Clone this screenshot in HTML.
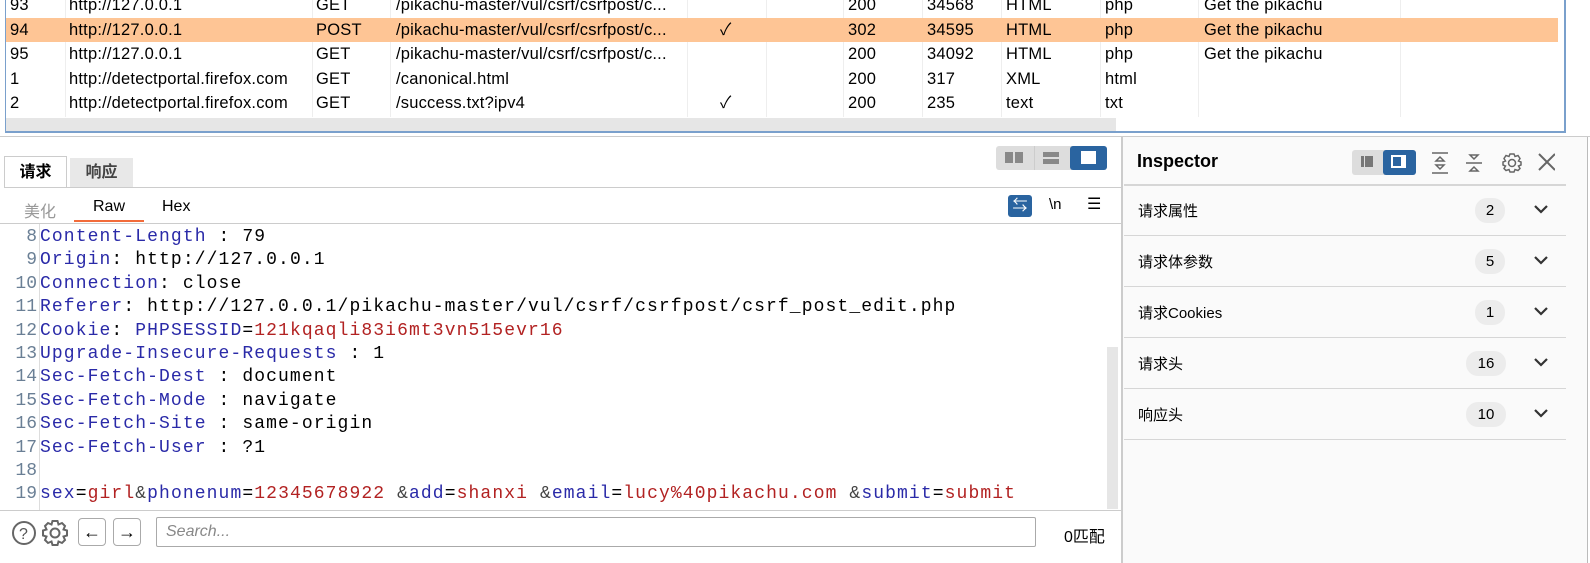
<!DOCTYPE html>
<html><head><meta charset="utf-8"><style>
*{box-sizing:border-box;margin:0;padding:0}
body{width:1590px;height:563px;overflow:hidden;background:#fff;font-family:"Liberation Sans","Noto Sans CJK SC",sans-serif;font-size:15px;color:#000;position:relative}
.abs{position:absolute}
.row{position:absolute;left:6px;width:1552px;height:24.5px;line-height:24.5px;white-space:nowrap;font-size:16.5px;letter-spacing:0.2px}
.row span{position:absolute;top:0}
.sep{position:absolute;top:0;height:117px;width:1px;background:#eee}
.code{position:absolute;left:0;font-family:"Liberation Mono",monospace;font-size:18px;letter-spacing:1.1px;white-space:pre;height:23.4px;line-height:23.4px}
.ln{display:inline-block;width:40px;text-align:right;color:#6a7f95;padding-right:3px;letter-spacing:0}
.k{color:#2a2aa8}.v{color:#b22222}.p{color:#444}
.sec{position:absolute;left:1124px;width:442px;height:51px;border-bottom:1.5px solid #d6d6d6;font-size:15px}
.sec .t{position:absolute;left:14px;top:15px}
.sec .b{position:absolute;top:13px;height:25px;border-radius:12px;background:#ececec;text-align:center;line-height:25px}
.sec svg{position:absolute;left:410px;top:19px}
</style></head><body>
<div class="abs" style="left:5px;top:0;width:1px;height:133px;background:#7aa0cc"></div>
<div class="abs" style="left:1564px;top:0;width:2px;height:133px;background:#7aa0cc"></div>
<div class="sep" style="left:65px"></div><div class="sep" style="left:312px"></div><div class="sep" style="left:390px"></div><div class="sep" style="left:687px"></div><div class="sep" style="left:766px"></div><div class="sep" style="left:843px"></div><div class="sep" style="left:922px"></div><div class="sep" style="left:1001px"></div><div class="sep" style="left:1100px"></div><div class="sep" style="left:1198px"></div><div class="sep" style="left:1400px"></div>
<div class="row" style="top:-7px"><span style="left:4px">93</span><span style="left:63px">http://127.0.0.1</span><span style="left:310px">GET</span><span style="left:390px">/pikachu-master/vul/csrf/csrfpost/c...</span><span style="left:842px">200</span><span style="left:921px">34568</span><span style="left:1000px">HTML</span><span style="left:1099px">php</span><span style="left:1198px">Get the pikachu</span></div>
<div class="row" style="top:17.5px;background:#fec595"><span style="left:4px">94</span><span style="left:63px">http://127.0.0.1</span><span style="left:310px">POST</span><span style="left:390px">/pikachu-master/vul/csrf/csrfpost/c...</span><span style="left:714px">✓</span><span style="left:842px">302</span><span style="left:921px">34595</span><span style="left:1000px">HTML</span><span style="left:1099px">php</span><span style="left:1198px">Get the pikachu</span></div>
<div class="row" style="top:42px"><span style="left:4px">95</span><span style="left:63px">http://127.0.0.1</span><span style="left:310px">GET</span><span style="left:390px">/pikachu-master/vul/csrf/csrfpost/c...</span><span style="left:842px">200</span><span style="left:921px">34092</span><span style="left:1000px">HTML</span><span style="left:1099px">php</span><span style="left:1198px">Get the pikachu</span></div>
<div class="row" style="top:66.5px"><span style="left:4px">1</span><span style="left:63px">http://detectportal.firefox.com</span><span style="left:310px">GET</span><span style="left:390px">/canonical.html</span><span style="left:842px">200</span><span style="left:921px">317</span><span style="left:1000px">XML</span><span style="left:1099px">html</span></div>
<div class="row" style="top:91px"><span style="left:4px">2</span><span style="left:63px">http://detectportal.firefox.com</span><span style="left:310px">GET</span><span style="left:390px">/success.txt?ipv4</span><span style="left:714px">✓</span><span style="left:842px">200</span><span style="left:921px">235</span><span style="left:1000px">text</span><span style="left:1099px">txt</span></div>
<div class="abs" style="left:6px;top:118px;width:1110px;height:13px;background:#e6e6e6"></div>
<div class="abs" style="left:5px;top:131px;width:1561px;height:2px;background:#7aa0cc"></div>
<div class="abs" style="left:0;top:136px;width:1590px;height:1px;background:#ccc"></div>
<div class="abs" style="left:4px;top:156px;width:63px;height:32px;border:1px solid #ccc;border-bottom:none;background:#fff;font-weight:bold;font-size:16px;text-align:center;line-height:32px">请求</div>
<div class="abs" style="left:70px;top:158px;width:63px;height:30px;background:#e8e8e8;font-weight:bold;font-size:16px;text-align:center;line-height:30px;color:#444">响应</div>
<div class="abs" style="left:4px;top:187px;width:1117px;height:1px;background:#ccc"></div>
<div class="abs" style="left:996px;top:146px;width:111px;height:24px;border-radius:3px;background:#ddd"></div>
<div class="abs" style="left:1005px;top:152px;width:8px;height:11px;background:#888"></div><div class="abs" style="left:1015px;top:152px;width:8px;height:11px;background:#888"></div>
<div class="abs" style="left:1034px;top:146px;width:1px;height:24px;background:#ccc"></div>
<div class="abs" style="left:1043px;top:152px;width:16px;height:5px;background:#888"></div><div class="abs" style="left:1043px;top:159px;width:16px;height:5px;background:#888"></div>
<div class="abs" style="left:1070px;top:146px;width:37px;height:24px;border-radius:3px;background:#2a64a0"></div>
<div class="abs" style="left:1081px;top:151px;width:15px;height:13px;background:#fff"></div>
<div class="abs" style="left:24px;top:198px;color:#999;font-size:16px">美化</div>
<div class="abs" style="left:93px;top:198px;font-size:16px">Raw</div>
<div class="abs" style="left:74px;top:220px;width:70px;height:2px;background:#f26b3a"></div>
<div class="abs" style="left:162px;top:198px;font-size:16px">Hex</div>
<div class="abs" style="left:1008px;top:195px;width:24px;height:22px;border-radius:3px;background:#2a64a0;color:#fff;text-align:center;line-height:22px;font-size:15px">⇆</div>
<div class="abs" style="left:1049px;top:196px;font-size:15px">\n</div>
<div class="abs" style="left:1087px;top:194px;font-size:16px">☰</div>
<div class="abs" style="left:0;top:223px;width:1121px;height:1px;background:#ccc"></div>
<div class="code" style="top:226px"><span class="ln">8</span><span class="k">Content-Length</span> : 79</div>
<div class="code" style="top:249.4px"><span class="ln">9</span><span class="k">Origin</span>: http://127.0.0.1</div>
<div class="code" style="top:272.8px"><span class="ln">10</span><span class="k">Connection</span>: close</div>
<div class="code" style="top:296.2px"><span class="ln">11</span><span class="k">Referer</span>: http://127.0.0.1/pikachu-master/vul/csrf/csrfpost/csrf_post_edit.php</div>
<div class="code" style="top:319.6px"><span class="ln">12</span><span class="k">Cookie</span>: <span class="k">PHPSESSID</span>=<span class="v">121kqaqli83i6mt3vn515evr16</span></div>
<div class="code" style="top:343px"><span class="ln">13</span><span class="k">Upgrade-Insecure-Requests</span> : 1</div>
<div class="code" style="top:366.4px"><span class="ln">14</span><span class="k">Sec-Fetch-Dest</span> : document</div>
<div class="code" style="top:389.8px"><span class="ln">15</span><span class="k">Sec-Fetch-Mode</span> : navigate</div>
<div class="code" style="top:413.2px"><span class="ln">16</span><span class="k">Sec-Fetch-Site</span> : same-origin</div>
<div class="code" style="top:436.6px"><span class="ln">17</span><span class="k">Sec-Fetch-User</span> : ?1</div>
<div class="code" style="top:460px"><span class="ln">18</span></div>
<div class="code" style="top:483.4px"><span class="ln">19</span><span class="k">sex</span>=<span class="v">girl</span><span class="p">&amp;</span><span class="k">phonenum</span>=<span class="v">12345678922</span> <span class="p">&amp;</span><span class="k">add</span>=<span class="v">shanxi</span> <span class="p">&amp;</span><span class="k">email</span>=<span class="v">lucy%40pikachu.com</span> <span class="p">&amp;</span><span class="k">submit</span>=<span class="v">submit</span></div>
<div class="abs" style="left:39px;top:224px;width:1px;height:286px;background:#ddd"></div>
<div class="abs" style="left:1107px;top:347px;width:11px;height:162px;background:#e6e6e6"></div>
<div class="abs" style="left:0;top:510px;width:1121px;height:1px;background:#ccc"></div>
<svg class="abs" style="left:10px;top:518px" width="62" height="30"><circle cx="14" cy="15" r="11" fill="none" stroke="#666" stroke-width="2"/><text x="9" y="21" font-size="16" font-family="Liberation Sans" fill="#555">?</text><g transform="translate(45,15)" fill="none" stroke="#666" stroke-width="2"><circle r="4.5"/><path d="M-2.5,-12H2.5L3.5,-8.5L7,-10L10,-7L8.5,-3.5L12,-2.5V2.5L8.5,3.5L10,7L7,10L3.5,8.5L2.5,12H-2.5L-3.5,8.5L-7,10L-10,7L-8.5,3.5L-12,2.5V-2.5L-8.5,-3.5L-10,-7L-7,-10L-3.5,-8.5Z"/></g></svg>
<div class="abs" style="left:78px;top:518px;width:28px;height:28px;border:1px solid #aaa;border-radius:4px;text-align:center;line-height:26px;font-size:18px">←</div>
<div class="abs" style="left:113px;top:518px;width:28px;height:28px;border:1px solid #aaa;border-radius:4px;text-align:center;line-height:26px;font-size:18px">→</div>
<div class="abs" style="left:156px;top:517px;width:880px;height:30px;border:1px solid #aaa;border-radius:2px;padding-left:9px;line-height:28px;color:#888;font-style:italic;font-size:16px">Search...</div>
<div class="abs" style="left:1064px;top:523px;font-size:16px">0匹配</div>
<div class="abs" style="left:1121px;top:137px;width:2px;height:426px;background:#ccc"></div>
<div class="abs" style="left:1123px;top:137px;width:465px;height:426px;background:#fafafa;border-right:1.5px solid #bbb"></div>
<div class="abs" style="left:1137px;top:151px;font-weight:bold;font-size:18px">Inspector</div>
<div class="abs" style="left:1352px;top:150px;width:64px;height:25px;border-radius:3px;background:#ddd"></div>
<div class="abs" style="left:1361px;top:156px;width:3px;height:11px;background:#777"></div><div class="abs" style="left:1365px;top:156px;width:8px;height:11px;background:#777"></div>
<div class="abs" style="left:1383px;top:150px;width:33px;height:25px;border-radius:3px;background:#2a64a0"></div>
<div class="abs" style="left:1391px;top:155px;width:15px;height:13px;border:2px solid #fff;border-right-width:5px"></div>
<svg class="abs" style="left:1430px;top:150px" width="125" height="26" fill="none" stroke="#666" stroke-width="1.5"><path d="M2,3H18M2,23H18M10,7L6,11H14ZM10,19L6,15H14Z"/><path d="M36,13H52M44,9L40,5H48ZM44,17L40,21H48Z"/><g transform="translate(82,13)"><circle r="3.5"/><path d="M-2,-9H2L3,-6.5L6,-7.5L8,-4.5L6.5,-2L9,-1V2L6.5,3L8,5.5L6,7.5L3,6.5L2,9H-2L-3,6.5L-6,7.5L-8,5.5L-6.5,3L-9,2V-1L-6.5,-2L-8,-4.5L-6,-7.5L-3,-6.5Z"/></g><path d="M109,4L125,20M125,4L109,20" stroke-width="2"/></svg>
<div class="abs" style="left:1124px;top:184px;width:442px;height:1.5px;background:#d6d6d6"></div>
<div class="sec" style="top:185px"><span class="t">请求属性</span><span class="b" style="left:351px;width:30px">2</span><svg width="14" height="10"><path d="M1,2L7,8L13,2" fill="none" stroke="#333" stroke-width="2.2"/></svg></div>
<div class="sec" style="top:236px"><span class="t">请求体参数</span><span class="b" style="left:351px;width:30px">5</span><svg width="14" height="10"><path d="M1,2L7,8L13,2" fill="none" stroke="#333" stroke-width="2.2"/></svg></div>
<div class="sec" style="top:287px"><span class="t">请求Cookies</span><span class="b" style="left:351px;width:30px">1</span><svg width="14" height="10"><path d="M1,2L7,8L13,2" fill="none" stroke="#333" stroke-width="2.2"/></svg></div>
<div class="sec" style="top:338px"><span class="t">请求头</span><span class="b" style="left:342px;width:40px">16</span><svg width="14" height="10"><path d="M1,2L7,8L13,2" fill="none" stroke="#333" stroke-width="2.2"/></svg></div>
<div class="sec" style="top:389px"><span class="t">响应头</span><span class="b" style="left:342px;width:40px">10</span><svg width="14" height="10"><path d="M1,2L7,8L13,2" fill="none" stroke="#333" stroke-width="2.2"/></svg></div>
</body></html>
